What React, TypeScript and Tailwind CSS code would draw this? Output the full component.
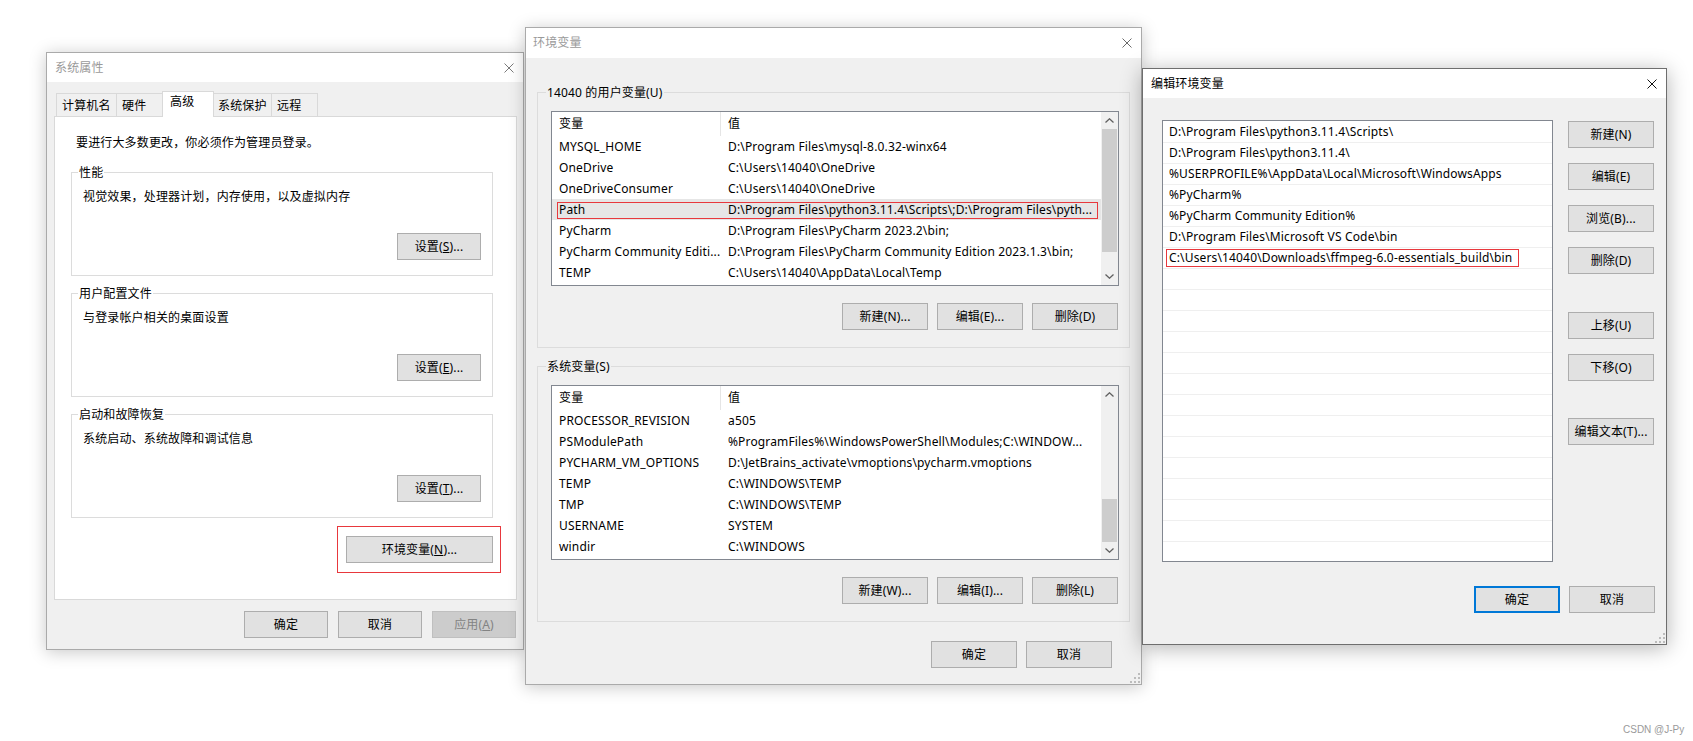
import React from "react";

type BtnProps = { children: React.ReactNode; w?: string; def?: boolean; disabled?: boolean };

const Btn = ({ children, w = "w-[86px]", def = false, disabled = false }: BtnProps) => (
  <div
    className={`${w} h-[27px] shrink-0 flex items-center justify-center whitespace-nowrap ${
      def ? "border-2 border-[#0078d7]" : disabled ? "border border-[#bfbfbf]" : "border border-[#adadad]"
    } ${disabled ? "bg-[#cccccc] text-[#838383]" : "bg-[#e1e1e1] text-black"}`}
  >
    {children}
  </div>
);

const CloseX = ({ color }: { color: string }) => (
  <svg width="10" height="10" viewBox="0 0 10 10" className="shrink-0">
    <path d="M0.5 0.5L9.5 9.5M9.5 0.5L0.5 9.5" stroke={color} strokeWidth="1" fill="none" />
  </svg>
);

const TitleBar = ({ title, pl, h, titleCls, xColor }: { title: string; pl: string; h: string; titleCls: string; xColor: string }) => (
  <div className={`${h} bg-white flex items-center shrink-0`}>
    <span className={`${pl} ${titleCls}`}>{title}</span>
    <div className="ml-auto mr-[9px] flex">
      <CloseX color={xColor} />
    </div>
  </div>
);

const Grip = () => (
  <svg width="10" height="10" viewBox="0 0 10 10" className="absolute right-[1px] bottom-[1px]">
    {[
      [8, 0],
      [8, 4],
      [4, 4],
      [8, 8],
      [4, 8],
      [0, 8],
    ].map(([x, y], i) => (
      <rect key={i} x={x} y={y} width="2" height="2" fill="#bcbcbc" />
    ))}
  </svg>
);

const Chevron = ({ up }: { up?: boolean }) => (
  <svg width="9" height="5" viewBox="0 0 9 5">
    <path d={up ? "M0.5 4.5L4.5 0.8L8.5 4.5" : "M0.5 0.5L4.5 4.2L8.5 0.5"} stroke="#606060" strokeWidth="1.3" fill="none" />
  </svg>
);

const Scroll = ({ thumb }: { thumb: string }) => (
  <div className="w-[17px] h-full bg-[#f0f0f0] flex flex-col shrink-0">
    <div className="h-[17px] flex items-center justify-center shrink-0">
      <Chevron up />
    </div>
    <div className="flex-1 flex flex-col">
      <div className={`mx-[1px] bg-[#cdcdcd] ${thumb}`} />
    </div>
    <div className="h-[17px] flex items-center justify-center shrink-0">
      <Chevron />
    </div>
  </div>
);

type Row = { n: string; v: string; hl?: boolean };

const VarList = ({ rows, thumb }: { rows: Row[]; thumb: string }) => (
  <div className="w-[568px] h-[175px] border border-[#828790] bg-white flex">
    <div className="flex-1 min-w-0 flex flex-col">
      <div className="h-[24px] flex shrink-0">
        <div className="w-[169px] pl-[7px] h-full flex items-center border-r border-[#e5e5e5]">变量</div>
        <div className="pl-[7px] flex items-center">值</div>
      </div>
      {rows.map((r, i) => (
        <div key={i} className={`relative h-[21px] flex items-center shrink-0 ${r.hl ? "bg-[#e6e6e6]" : ""}`}>
          <div className="w-[169px] pl-[7px] overflow-hidden whitespace-nowrap shrink-0">{r.n}</div>
          <div className="pl-[7px] overflow-hidden whitespace-nowrap min-w-0">{r.v}</div>
          {r.hl && <div className="absolute left-[5px] right-[3px] top-[3px] bottom-[1px] border border-[#e8383d]" />}
        </div>
      ))}
    </div>
    <Scroll thumb={thumb} />
  </div>
);

const VGroup = ({ mt, label, rows, thumb, btns }: { mt: string; label: string; rows: Row[]; thumb: string; btns: string[] }) => (
  <div className={`${mt} w-[593px] h-[256px] border border-[#dcdcdc] flex flex-col`}>
    <div className="-mt-[7px] ml-[8px] px-[1px] bg-[#f0f0f0] w-fit h-[14px] leading-[14px]">{label}</div>
    <div className="mt-[11px] ml-[13px]">
      <VarList rows={rows} thumb={thumb} />
    </div>
    <div className="mt-[17px] ml-[13px] w-[567px] flex justify-end gap-[9px]">
      {btns.map((b) => (
        <Btn key={b}>{b}</Btn>
      ))}
    </div>
  </div>
);

const Tab = ({ w, cls, pl, children }: { w: string; cls: string; pl: string; children: React.ReactNode }) => (
  <div className={`${w} h-[24px] ${cls} ${pl} border-[#d9d9d9] flex items-center shrink-0`}>{children}</div>
);

const Group = ({ mt, label, text, btn }: { mt: string; label: string; text: string; btn: React.ReactNode }) => (
  <div className={`${mt} w-[422px] h-[104px] border border-[#dcdcdc] flex flex-col shrink-0`}>
    <div className="-mt-[7px] ml-[6px] px-[1px] bg-white w-fit h-[14px] leading-[14px]">{label}</div>
    <div className="mt-[9px] ml-[11px]">{text}</div>
    <div className="mt-[28px] mr-[11px] self-end">
      <Btn w="w-[84px]">{btn}</Btn>
    </div>
  </div>
);

const SHADOW = "shadow-[0_2px_16px_rgba(0,0,0,0.22)]";

function Win1() {
  return (
    <div className={`absolute left-[46px] top-[52px] w-[478px] h-[598px] border border-[#aaaaaa] bg-[#f0f0f0] flex flex-col ${SHADOW}`}>
      <TitleBar title="系统属性" pl="pl-[8px]" h="h-[29px]" titleCls="text-[#9a9a9a]" xColor="#7a7a7a" />
      <div className="flex flex-col pl-[7px]">
        <div className="mt-[9px] ml-[2px] h-[26px] flex items-end">
          <Tab w="w-[60px]" cls="border-t border-l" pl="pl-[5px]">计算机名</Tab>
          <Tab w="w-[46px]" cls="border-t border-l" pl="pl-[5px]">硬件</Tab>
          <div className="relative z-10 w-[52px] h-[26px] bg-white border-t border-l border-r border-[#d9d9d9] pl-[7px] pt-[2px] shrink-0">
            高级
          </div>
          <Tab w="w-[57px]" cls="border-t" pl="pl-[4px]">系统保护</Tab>
          <Tab w="w-[47px]" cls="border-t border-l border-r" pl="pl-[5px]">远程</Tab>
        </div>
        <div className="-mt-px w-[463px] h-[484px] bg-white border border-[#d9d9d9] flex flex-col pl-[16px]">
          <div className="mt-[18px] ml-[5px]">要进行大多数更改，你必须作为管理员登录。</div>
          <Group
            mt="mt-[21px]"
            label="性能"
            text="视觉效果，处理器计划，内存使用，以及虚拟内存"
            btn={
              <>
                设置(<u>S</u>)...
              </>
            }
          />
          <Group
            mt="mt-[17px]"
            label="用户配置文件"
            text="与登录帐户相关的桌面设置"
            btn={
              <>
                设置(<u>E</u>)...
              </>
            }
          />
          <Group
            mt="mt-[17px]"
            label="启动和故障恢复"
            text="系统启动、系统故障和调试信息"
            btn={
              <>
                设置(<u>T</u>)...
              </>
            }
          />
          <div className="mt-[18px] w-[422px] flex justify-end">
            <div className="relative">
              <Btn w="w-[147px]">
                环境变量(<u>N</u>)...
              </Btn>
              <div className="absolute -left-[9px] -right-[8px] -top-[10px] -bottom-[10px] border border-[#e8383d]" />
            </div>
          </div>
        </div>
        <div className="mt-[11px] w-[462px] flex justify-end gap-[10px]">
          <Btn w="w-[84px]">确定</Btn>
          <Btn w="w-[84px]">取消</Btn>
          <Btn w="w-[84px]" disabled>
            应用(<u>A</u>)
          </Btn>
        </div>
      </div>
    </div>
  );
}

const userRows: Row[] = [
  { n: "MYSQL_HOME", v: "D:\\Program Files\\mysql-8.0.32-winx64" },
  { n: "OneDrive", v: "C:\\Users\\14040\\OneDrive" },
  { n: "OneDriveConsumer", v: "C:\\Users\\14040\\OneDrive" },
  { n: "Path", v: "D:\\Program Files\\python3.11.4\\Scripts\\;D:\\Program Files\\pyth...", hl: true },
  { n: "PyCharm", v: "D:\\Program Files\\PyCharm 2023.2\\bin;" },
  { n: "PyCharm Community Editi...", v: "D:\\Program Files\\PyCharm Community Edition 2023.1.3\\bin;" },
  { n: "TEMP", v: "C:\\Users\\14040\\AppData\\Local\\Temp" },
];

const sysRows: Row[] = [
  { n: "PROCESSOR_REVISION", v: "a505" },
  { n: "PSModulePath", v: "%ProgramFiles%\\WindowsPowerShell\\Modules;C:\\WINDOW..." },
  { n: "PYCHARM_VM_OPTIONS", v: "D:\\JetBrains_activate\\vmoptions\\pycharm.vmoptions" },
  { n: "TEMP", v: "C:\\WINDOWS\\TEMP" },
  { n: "TMP", v: "C:\\WINDOWS\\TEMP" },
  { n: "USERNAME", v: "SYSTEM" },
  { n: "windir", v: "C:\\WINDOWS" },
];

function Win2() {
  return (
    <div className={`absolute left-[525px] top-[27px] w-[617px] h-[658px] border border-[#aaaaaa] bg-[#f0f0f0] flex flex-col ${SHADOW}`}>
      <TitleBar title="环境变量" pl="pl-[7px]" h="h-[30px]" titleCls="text-[#9a9a9a]" xColor="#6a6a6a" />
      <div className="flex flex-col pl-[11px]">
        <VGroup
          mt="mt-[34px]"
          label="14040 的用户变量(U)"
          rows={userRows}
          thumb="h-[123px]"
          btns={["新建(N)...", "编辑(E)...", "删除(D)"]}
        />
        <VGroup
          mt="mt-[18px]"
          label="系统变量(S)"
          rows={sysRows}
          thumb="mt-[96px] h-[43px]"
          btns={["新建(W)...", "编辑(I)...", "删除(L)"]}
        />
        <div className="mt-[19px] w-[575px] flex justify-end gap-[9px]">
          <Btn>确定</Btn>
          <Btn>取消</Btn>
        </div>
      </div>
      <Grip />
    </div>
  );
}

const paths = [
  "D:\\Program Files\\python3.11.4\\Scripts\\",
  "D:\\Program Files\\python3.11.4\\",
  "%USERPROFILE%\\AppData\\Local\\Microsoft\\WindowsApps",
  "%PyCharm%",
  "%PyCharm Community Edition%",
  "D:\\Program Files\\Microsoft VS Code\\bin",
  "C:\\Users\\14040\\Downloads\\ffmpeg-6.0-essentials_build\\bin",
];

function Win3() {
  const rows = Array.from({ length: 21 }, (_, i) => paths[i] ?? "");
  return (
    <div className="absolute left-[1142px] top-[68px] w-[525px] h-[577px] border border-[#6e6e6e] bg-[#f0f0f0] flex flex-col shadow-[0_3px_20px_rgba(0,0,0,0.3)]">
      <TitleBar title="编辑环境变量" pl="pl-[8px]" h="h-[29px]" titleCls="text-black" xColor="#111111" />
      <div className="flex flex-col">
        <div className="flex items-start mt-[22px] ml-[19px]">
          <div className="w-[391px] h-[442px] border border-[#828790] bg-white overflow-hidden flex flex-col pt-[1px] shrink-0">
            {rows.map((t, i) =>
              i === 6 ? (
                <div key={i} className="h-[21px] border-b border-[#efefef] flex items-center pl-[3px] shrink-0">
                  <span className="border border-[#e8383d] pl-[2px] pr-[6px] h-[18px] leading-[16px] whitespace-nowrap">{t}</span>
                </div>
              ) : (
                <div key={i} className="h-[21px] border-b border-[#efefef] flex items-center pl-[6px] whitespace-nowrap shrink-0">
                  {t}
                </div>
              )
            )}
          </div>
          <div className="ml-[15px] mt-[1px] flex flex-col">
            <Btn>新建(N)</Btn>
            <div className="mt-[15px]">
              <Btn>编辑(E)</Btn>
            </div>
            <div className="mt-[15px]">
              <Btn>浏览(B)...</Btn>
            </div>
            <div className="mt-[15px]">
              <Btn>删除(D)</Btn>
            </div>
            <div className="mt-[38px]">
              <Btn>上移(U)</Btn>
            </div>
            <div className="mt-[15px]">
              <Btn>下移(O)</Btn>
            </div>
            <div className="mt-[37px]">
              <Btn>编辑文本(T)...</Btn>
            </div>
          </div>
        </div>
        <div className="mt-[24px] flex justify-end gap-[9px] pr-[11px]">
          <Btn def>确定</Btn>
          <Btn>取消</Btn>
        </div>
      </div>
      <Grip />
    </div>
  );
}

export default function App() {
  return (
    <div className="relative w-[1693px] h-[741px] bg-white overflow-hidden font-['Noto_Sans','Noto_Sans_CJK_SC',sans-serif] text-[12px] leading-[16px] tracking-[0.15px] text-black">
      <Win1 />
      <Win2 />
      <Win3 />
      <div className="absolute left-[1623px] top-[723px] text-[10px] leading-[14px] tracking-normal text-[#9a9a9a] font-['Liberation_Sans',sans-serif]">
        CSDN @J-Py
      </div>
    </div>
  );
}
